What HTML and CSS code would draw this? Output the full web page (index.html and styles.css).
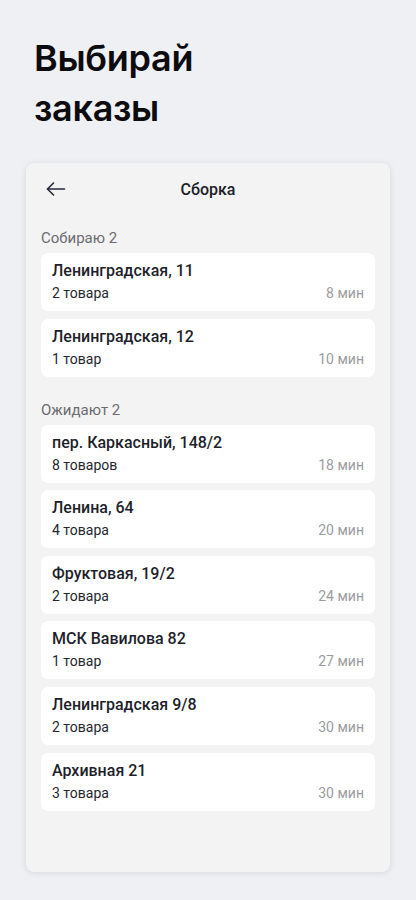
FILE: index.html
```html
<!DOCTYPE html>
<html lang="ru">
<head>
<meta charset="UTF-8">
<meta name="viewport" content="width=device-width, initial-scale=1.0">
<title>Выбирай заказы</title>
<link rel="stylesheet" href="styles.css">
</head>
<body>
<div class="page">
    <h1 class="promo">Выбирай<br>заказы</h1>

    <div class="screen">
        <div class="topbar">
            <span class="back">
                <svg width="20" height="14" viewBox="0 0 20 14" fill="none" stroke="#262838" stroke-width="1.6" stroke-linecap="round" stroke-linejoin="round">
                    <path d="M18.5 7H1.5"/>
                    <path d="M7.5 1L1.5 7L7.5 13"/>
                </svg>
            </span>
            <span class="topbar-title">Сборка</span>
        </div>

        <div class="section">
            <div class="section-label">Собираю 2</div>
            <div class="order">
                <div class="order-name">Ленинградская, 11</div>
                <div class="order-info"><span>2 товара</span><span class="order-time">8 мин</span></div>
            </div>
            <div class="order">
                <div class="order-name">Ленинградская, 12</div>
                <div class="order-info"><span>1 товар</span><span class="order-time">10 мин</span></div>
            </div>
        </div>

        <div class="section">
            <div class="section-label">Ожидают 2</div>
            <div class="order">
                <div class="order-name">пер. Каркасный, 148/2</div>
                <div class="order-info"><span>8 товаров</span><span class="order-time">18 мин</span></div>
            </div>
            <div class="order">
                <div class="order-name">Ленина, 64</div>
                <div class="order-info"><span>4 товара</span><span class="order-time">20 мин</span></div>
            </div>
            <div class="order">
                <div class="order-name">Фруктовая, 19/2</div>
                <div class="order-info"><span>2 товара</span><span class="order-time">24 мин</span></div>
            </div>
            <div class="order">
                <div class="order-name">МСК Вавилова 82</div>
                <div class="order-info"><span>1 товар</span><span class="order-time">27 мин</span></div>
            </div>
            <div class="order">
                <div class="order-name">Ленинградская 9/8</div>
                <div class="order-info"><span>2 товара</span><span class="order-time">30 мин</span></div>
            </div>
            <div class="order">
                <div class="order-name">Архивная 21</div>
                <div class="order-info"><span>3 товара</span><span class="order-time">30 мин</span></div>
            </div>
        </div>
    </div>
</div>
</body>
</html>
```

FILE: styles.css
```css
body {
    margin: 0;
    padding: 0;
    background-color: #eff0f4;
    font-family: Roboto, 'Noto Sans', sans-serif;
    color: #1e1f2b;
}
.page {
    width: 416px;
    height: 900px;
    overflow: hidden;
}
.promo {
    margin: 33px 0 0 34px;
    font-family: Inter, 'Noto Sans', sans-serif;
    font-size: 36px;
    font-weight: 600;
    line-height: 50px;
    letter-spacing: -0.3px;
    color: #0c0c0e;
}
.screen {
    margin: 30px 0 0 26px;
    width: 364px;
    height: 709px;
    box-sizing: border-box;
    background-color: #f3f3f4;
    border-radius: 8px;
    box-shadow: 0 1px 6px rgba(40, 44, 70, 0.12);
}
.topbar {
    position: relative;
    height: 52px;
    display: flex;
    align-items: center;
    justify-content: center;
}
.back {
    position: absolute;
    left: 20px;
    top: 19px;
    display: flex;
}
.topbar-title {
    font-size: 16px;
    font-weight: 500;
    color: #1c1d28;
}
.section {
    padding: 0 15px;
    display: flex;
    flex-direction: column;
    gap: 7.6px;
}
.topbar + .section {
    margin-top: 13px;
}
.section + .section {
    margin-top: 23px;
}
.section-label {
    font-size: 15px;
    line-height: 20px;
    color: #6b6b6f;
    margin-bottom: -2.6px;
}
.order {
    background-color: #fff;
    border-radius: 7px;
    padding: 7px 11px;
    height: 58px;
    box-sizing: border-box;
}
.order-name {
    font-size: 16px;
    font-weight: 500;
    line-height: 22px;
    color: #1e1f2b;
}
.order-info {
    display: flex;
    justify-content: space-between;
    font-size: 14px;
    line-height: 22px;
    color: #26272e;
}
.order-time {
    color: #9b9b9f;
}
```
